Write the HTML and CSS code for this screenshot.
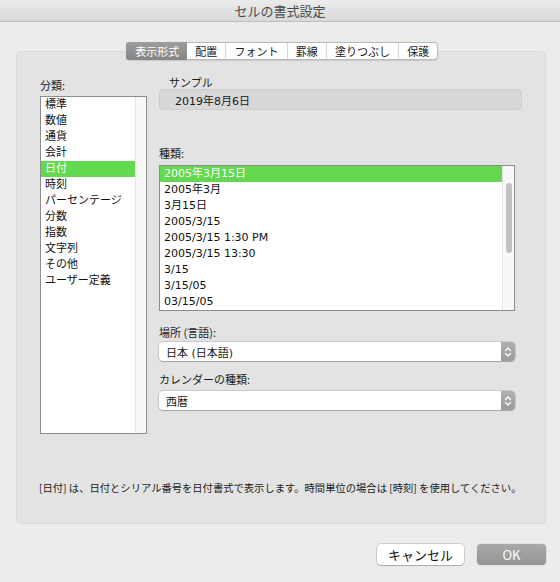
FILE: index.html
```html
<!DOCTYPE html>
<html lang="ja">
<head>
<meta charset="utf-8">
<title>セルの書式設定</title>
<link rel="stylesheet" href="styles.css">
</head>
<body>
<div class="window">
  <div class="titlebar">セルの書式設定</div>
  <div class="content">
    <div class="tabs">
      <div class="tab tab-active">表示形式</div>
      <div class="tab">配置</div>
      <div class="tab">フォント</div>
      <div class="tab">罫線</div>
      <div class="tab">塗りつぶし</div>
      <div class="tab">保護</div>
    </div>
    <div class="panel">
      <div class="panel-main">
        <div class="col-left">
          <div class="label label-cat">分類:</div>
          <div class="listbox list-cat">
            <div class="rows">
              <div class="row">標準</div>
              <div class="row">数値</div>
              <div class="row">通貨</div>
              <div class="row">会計</div>
              <div class="row row-sel">日付</div>
              <div class="row">時刻</div>
              <div class="row">パーセンテージ</div>
              <div class="row">分数</div>
              <div class="row">指数</div>
              <div class="row">文字列</div>
              <div class="row">その他</div>
              <div class="row">ユーザー定義</div>
            </div>
            <div class="track"></div>
          </div>
        </div>
        <div class="col-right">
          <div class="sample-label">サンプル</div>
          <div class="sample">2019年8月6日</div>
          <div class="label label-kind">種類:</div>
          <div class="listbox list-fmt">
            <div class="rows">
              <div class="row row-sel">2005年3月15日</div>
              <div class="row">2005年3月</div>
              <div class="row">3月15日</div>
              <div class="row">2005/3/15</div>
              <div class="row">2005/3/15 1:30 PM</div>
              <div class="row">2005/3/15 13:30</div>
              <div class="row">3/15</div>
              <div class="row">3/15/05</div>
              <div class="row">03/15/05</div>
            </div>
            <div class="track track-fmt"><div class="thumb"></div></div>
          </div>
          <div class="label label-locale">場所 (言語):</div>
          <div class="select">
            <span class="select-text">日本 (日本語)</span>
            <span class="arrows"><svg width="14" height="18" viewBox="0 0 14 18"><path d="M4.5 7.5 L7 5 L9.5 7.5" fill="none" stroke="#fff" stroke-width="1.3" stroke-linecap="round" stroke-linejoin="round"/><path d="M4.5 10.5 L7 13 L9.5 10.5" fill="none" stroke="#fff" stroke-width="1.3" stroke-linecap="round" stroke-linejoin="round"/></svg></span>
          </div>
          <div class="label label-cal">カレンダーの種類:</div>
          <div class="select">
            <span class="select-text">西暦</span>
            <span class="arrows"><svg width="14" height="18" viewBox="0 0 14 18"><path d="M4.5 7.5 L7 5 L9.5 7.5" fill="none" stroke="#fff" stroke-width="1.3" stroke-linecap="round" stroke-linejoin="round"/><path d="M4.5 10.5 L7 13 L9.5 10.5" fill="none" stroke="#fff" stroke-width="1.3" stroke-linecap="round" stroke-linejoin="round"/></svg></span>
          </div>
        </div>
      </div>
      <p class="desc">[日付] は、日付とシリアル番号を日付書式で表示します。時間単位の場合は [時刻] を使用してください。</p>
    </div>
    <div class="buttons">
      <div class="btn btn-cancel">キャンセル</div>
      <div class="btn btn-ok">OK</div>
    </div>
  </div>
</div>
</body>
</html>
```

FILE: styles.css
```css
* { box-sizing: border-box; }

html, body {
  margin: 0;
  padding: 0;
}

body {
  width: 560px;
  height: 582px;
  background: #ececec;
  font-family: "DejaVu Sans", "Noto Sans CJK JP", sans-serif;
  font-size: 11px;
  color: #1a1a1a;
  overflow: hidden;
}

.window {
  width: 560px;
  height: 582px;
  display: flex;
  flex-direction: column;
}

.titlebar {
  height: 22px;
  flex: none;
  background: linear-gradient(#ebebeb, #d8d8d8);
  border-bottom: 1px solid #bebebe;
  display: flex;
  align-items: center;
  justify-content: center;
  font-family: "Noto Sans CJK JP", sans-serif;
  font-size: 13px;
  color: #4a4a4a;
}

.content {
  display: flex;
  flex-direction: column;
  padding: 0 14px 0 16px;
}

.tabs {
  margin-top: 20px;
  align-self: center;
  margin-left: 2px;
  display: flex;
  height: 18px;
  background: #fff;
  border: 1px solid #b9b9b9;
  border-radius: 4px;
  box-shadow: 0 0.5px 1px rgba(0,0,0,0.12);
  position: relative;
  z-index: 2;
  font-family: "Noto Sans CJK JP", sans-serif;
  font-size: 11px;
}

.tab {
  padding: 0 8.1px;
  display: flex;
  align-items: center;
  color: #1a1a1a;
  border-left: 1px solid #d6d6d6;
  line-height: 16px;
}

.tab:first-child { border-left: none; }

.tab-active {
  background: linear-gradient(#9d9d9d, #858585);
  color: #fff;
  border-radius: 3px 0 0 3px;
  margin: -1px 0 -1px -1px;
  padding-left: 9.5px;
}

.tab-active + .tab { border-left: none; }

.panel {
  margin-top: -9px;
  background: #e3e3e3;
  border: 1px solid #dadada;
  border-radius: 5px;
  padding: 25px 23px 28px 23px;
  display: flex;
  flex-direction: column;
}

.panel-main {
  display: flex;
  gap: 12px;
}

.col-left {
  display: flex;
  flex-direction: column;
  width: 107px;
}

.col-right {
  display: flex;
  flex-direction: column;
  flex: 1;
}

.label {
  font-family: "Noto Sans CJK JP", sans-serif;
  font-size: 11px;
  line-height: 14px;
  color: #1a1a1a;
}

.label-cat { line-height: 16px; }

.listbox {
  background: #fff;
  border: 1px solid #8c8c8c;
  display: flex;
}

.list-cat {
  margin-top: 3px;
  height: 338px;
}

.rows {
  flex: 1;
  display: flex;
  flex-direction: column;
  overflow: hidden;
}

.row {
  height: 16px;
  line-height: 16px;
  padding-left: 4px;
  white-space: nowrap;
  flex: none;
  color: #111;
}

.row-sel {
  background: #62d94f;
  color: #fff;
}

.track {
  width: 11px;
  flex: none;
  background: #f8f8f8;
  border-left: 1px solid #e6e6e6;
  position: relative;
}

.track-fmt {
  width: 12px;
}

.thumb {
  position: absolute;
  left: 3px;
  top: 17px;
  width: 6px;
  height: 70px;
  border-radius: 3px;
  background: #c2c2c2;
}

.sample-label {
  font-family: "Noto Sans CJK JP", sans-serif;
  font-size: 11px;
  line-height: 13px;
  padding-left: 10px;
  margin-top: -1px;
}

.sample {
  height: 21px;
  background: #d8d8d8;
  border: 1px solid #cdcdcd;
  border-radius: 4px;
  padding-left: 15px;
  display: flex;
  align-items: center;
}

.label-kind { margin-top: 36px; }

.list-fmt {
  margin-top: 5px;
  height: 146px;
  width: 356px;
}

.label-locale { margin-top: 14px; }

.label-cal { margin-top: 11px; }

.select {
  margin-top: 3px;
  width: 356px;
  height: 19px;
  background: #fff;
  border-radius: 4px;
  box-shadow: 0 0 0 0.5px rgba(0,0,0,0.22), 0 1px 1px rgba(0,0,0,0.18);
  display: flex;
  align-items: center;
  overflow: hidden;
}

.label-cal + .select { margin-top: 5px; }

.select-text {
  flex: 1;
  padding-left: 7px;
}

.arrows {
  width: 14px;
  height: 19px;
  flex: none;
  background: linear-gradient(#b0b0b0, #9b9b9b);
  display: flex;
  align-items: center;
  justify-content: center;
}

.arrows svg { display: block; }

.desc {
  margin: 47px 0 0 -1px;
  font-family: "Noto Sans CJK JP", sans-serif;
  font-size: 10.3px;
  line-height: 14px;
  white-space: nowrap;
  color: #1a1a1a;
}

.buttons {
  margin-top: 20px;
  display: flex;
  justify-content: flex-end;
  gap: 13px;
}

.btn {
  height: 21px;
  border-radius: 4px;
  display: flex;
  align-items: center;
  justify-content: center;
  font-family: "Noto Sans CJK JP", sans-serif;
  font-size: 13px;
}

.btn-cancel {
  width: 87px;
  background: #fff;
  box-shadow: 0 0 0 0.5px rgba(0,0,0,0.25), 0 1px 1px rgba(0,0,0,0.18);
  color: #111;
}

.btn-ok {
  width: 69px;
  background: linear-gradient(#a9a9a9, #949494);
  color: #fff;
  box-shadow: 0 0 0 0.5px rgba(0,0,0,0.12);
}
```
